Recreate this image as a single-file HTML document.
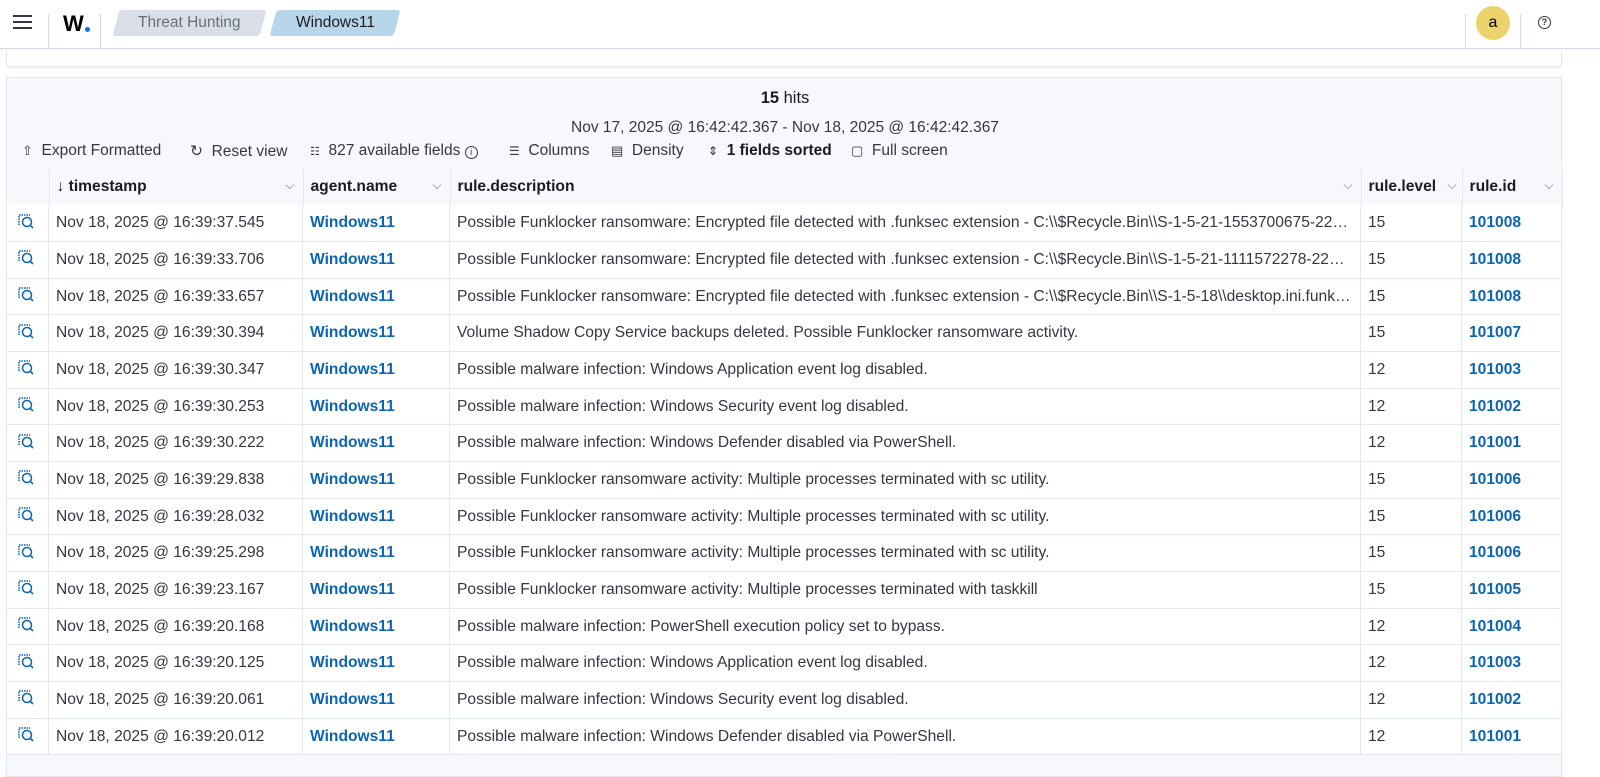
<!DOCTYPE html>
<html><head><meta charset="utf-8"><style>
*{box-sizing:border-box;margin:0;padding:0}
body{width:1600px;height:777px;overflow:hidden;background:#fff;font-family:"Liberation Sans",Arial,sans-serif;color:#343741;position:relative}
.hdr{position:absolute;left:0;top:0;width:1600px;height:49px;border-bottom:1px solid #d3dae6;background:#fff}
.vl{position:absolute;top:14px;height:35px;width:1px;background:#d3dae6}
.crumb{position:absolute;top:10px;height:26px;font-size:15.5px;line-height:26px;text-align:center;transform:skewX(-15deg);border-radius:3px}
.crumb span{display:inline-block;transform:skewX(15deg)}
.card{position:absolute;left:6px;top:50px;width:1556px;height:17px;background:#fff;border:1px solid #e3e8f0;border-top:none;border-radius:0 0 5px 5px;box-shadow:0 2px 2px rgba(0,0,0,.06)}
.panel{position:absolute;left:6px;top:77px;width:1556px;height:700px;background:#f7f8fc;border:1px solid #e3e8f0}
.tb{position:absolute;left:0;top:91px;border-collapse:collapse;table-layout:fixed;width:1555px;font-size:15.6px}
.tb td,.tb th{border-right:1px solid #e3e8f0;border-bottom:1px solid #e3e8f0;height:36.67px;padding:0 7px;white-space:nowrap;overflow:hidden;text-overflow:ellipsis;text-align:left}
.tb th{background:#f7f8fc;font-weight:bold;color:#1a1c21;height:36px;position:relative}
.tb td{background:#fff}
.tb th .c{position:absolute;right:8px;top:9px;color:#69707d;font-weight:normal;font-size:12px}
a{color:#0b64b4;font-weight:bold;text-decoration:none}
.tool{position:absolute;top:142px;font-size:15.5px;color:#343741}
</style></head><body>
<div class="hdr">
 <div style="position:absolute;left:13px;top:15px;width:19px;height:2px;background:#343741;box-shadow:0 6px 0 #343741,0 12px 0 #343741"></div>
 <div class="vl" style="left:48px"></div>
 <div style="position:absolute;left:63px;top:11px;font-size:22px;font-weight:bold;color:#000">W</div>
 <div style="position:absolute;left:85px;top:27px;width:5px;height:5px;border-radius:50%;background:#0077ff"></div>
 <div class="vl" style="left:100px"></div>
 <div class="crumb" style="left:116px;width:147px;background:#d9dee8;color:#69707d"><span>Threat Hunting</span></div>
 <div class="crumb" style="left:273px;width:124px;background:#b8d6ea;color:#1a1c21"><span>Windows11</span></div>
 <div class="vl" style="left:1465px"></div>
 <div style="position:absolute;left:1476px;top:6px;width:34px;height:34px;border-radius:50%;background:#ecd26b;text-align:center;line-height:33px;font-size:16px;color:#000">a</div>
 <div class="vl" style="left:1520px"></div>
 <div style="position:absolute;left:1538px;top:16px;width:13px;height:13px;border:1.5px solid #343741;border-radius:50%;font-size:9px;text-align:center;line-height:11px;font-weight:bold">?</div>
</div>
<div class="card"></div>
<div class="panel">
 <div style="position:absolute;left:0;width:1556px;top:11px;text-align:center;font-size:16.5px;color:#1a1c21"><b>15</b> hits</div>
 <div style="position:absolute;left:0;width:1556px;top:41px;text-align:center;font-size:15.5px;color:#343741">Nov 17, 2025 @ 16:42:42.367 - Nov 18, 2025 @ 16:42:42.367</div>
 <table class="tb">
 <colgroup><col style="width:42px"><col style="width:254px"><col style="width:147px"><col style="width:911px"><col style="width:101px"><col style="width:100px"></colgroup>
 <tr><th></th><th><span style="font-weight:normal">↓</span> timestamp<span class="c">⌵</span></th><th>agent.name<span class="c">⌵</span></th><th>rule.description<span class="c">⌵</span></th><th style="padding-right:2px">rule.level<span class="c" style="right:5px">⌵</span></th><th>rule.id<span class="c">⌵</span></th></tr>
 </table>
</div>
<div class="tool" style="left:22px"><span style="font-size:13px">⇧</span>&nbsp; Export Formatted</div>
<div class="tool" style="left:190px">↻&nbsp; Reset view</div>
<div class="tool" style="left:310px"><span style="font-size:11px">☷</span>&nbsp; 827 available fields <span style="border:1.3px solid #343741;border-radius:50%;display:inline-block;width:13px;height:13px;line-height:11px;text-align:center;font-size:9px">i</span></div>
<div class="tool" style="left:509px"><span style="font-size:12px">☰</span>&nbsp; Columns</div>
<div class="tool" style="left:611px"><span style="font-size:13px">▤</span>&nbsp; Density</div>
<div class="tool" style="left:708px;color:#1a1c21"><span style="font-size:12px">⇕</span>&nbsp; <b>1 fields sorted</b></div>
<div class="tool" style="left:851px"><span style="font-size:13px">▢</span>&nbsp; Full screen</div>
<table class="tb" style="left:6px;top:205px;width:1556px;position:absolute;border-left:1px solid #e3e8f0">
<colgroup><col style="width:42px"><col style="width:254px"><col style="width:147px"><col style="width:911px"><col style="width:101px"><col style="width:100px"></colgroup>
<tbody id="b"></tbody>
</table>
<script>
var r=[["37.545","Possible Funklocker ransomware: Encrypted file detected with .funksec extension - C:\\\\$Recycle.Bin\\\\S-1-5-21-1553700675-2233445566","15","101008"],
["33.706","Possible Funklocker ransomware: Encrypted file detected with .funksec extension - C:\\\\$Recycle.Bin\\\\S-1-5-21-1111572278-2233445566","15","101008"],
["33.657","Possible Funklocker ransomware: Encrypted file detected with .funksec extension - C:\\\\$Recycle.Bin\\\\S-1-5-18\\\\desktop.ini.funksec","15","101008"],
["30.394","Volume Shadow Copy Service backups deleted. Possible Funklocker ransomware activity.","15","101007"],
["30.347","Possible malware infection: Windows Application event log disabled.","12","101003"],
["30.253","Possible malware infection: Windows Security event log disabled.","12","101002"],
["30.222","Possible malware infection: Windows Defender disabled via PowerShell.","12","101001"],
["29.838","Possible Funklocker ransomware activity: Multiple processes terminated with sc utility.","15","101006"],
["28.032","Possible Funklocker ransomware activity: Multiple processes terminated with sc utility.","15","101006"],
["25.298","Possible Funklocker ransomware activity: Multiple processes terminated with sc utility.","15","101006"],
["23.167","Possible Funklocker ransomware activity: Multiple processes terminated with taskkill","15","101005"],
["20.168","Possible malware infection: PowerShell execution policy set to bypass.","12","101004"],
["20.125","Possible malware infection: Windows Application event log disabled.","12","101003"],
["20.061","Possible malware infection: Windows Security event log disabled.","12","101002"],
["20.012","Possible malware infection: Windows Defender disabled via PowerShell.","12","101001"]];
var ic='<svg width="18" height="18" viewBox="0 0 18 18"><path d="M2 13V3h11" fill="none" stroke="#0b64b4" stroke-width="1.5" stroke-dasharray="1.5 1"/><circle cx="10" cy="10" r="4.5" fill="none" stroke="#0b64b4" stroke-width="1.5"/><path d="M13.2 13.2L16 16" stroke="#0b64b4" stroke-width="1.6"/></svg>';
var h='';r.forEach(function(x){h+='<tr><td style="padding:0 0 0 10px">'+ic+'</td><td>Nov 18, 2025 @ 16:39:'+x[0]+'</td><td><a>Windows11</a></td><td>'+x[1]+'</td><td>'+x[2]+'</td><td><a>'+x[3]+'</a></td></tr>';});
document.getElementById('b').innerHTML=h;
</script>
</body></html>
